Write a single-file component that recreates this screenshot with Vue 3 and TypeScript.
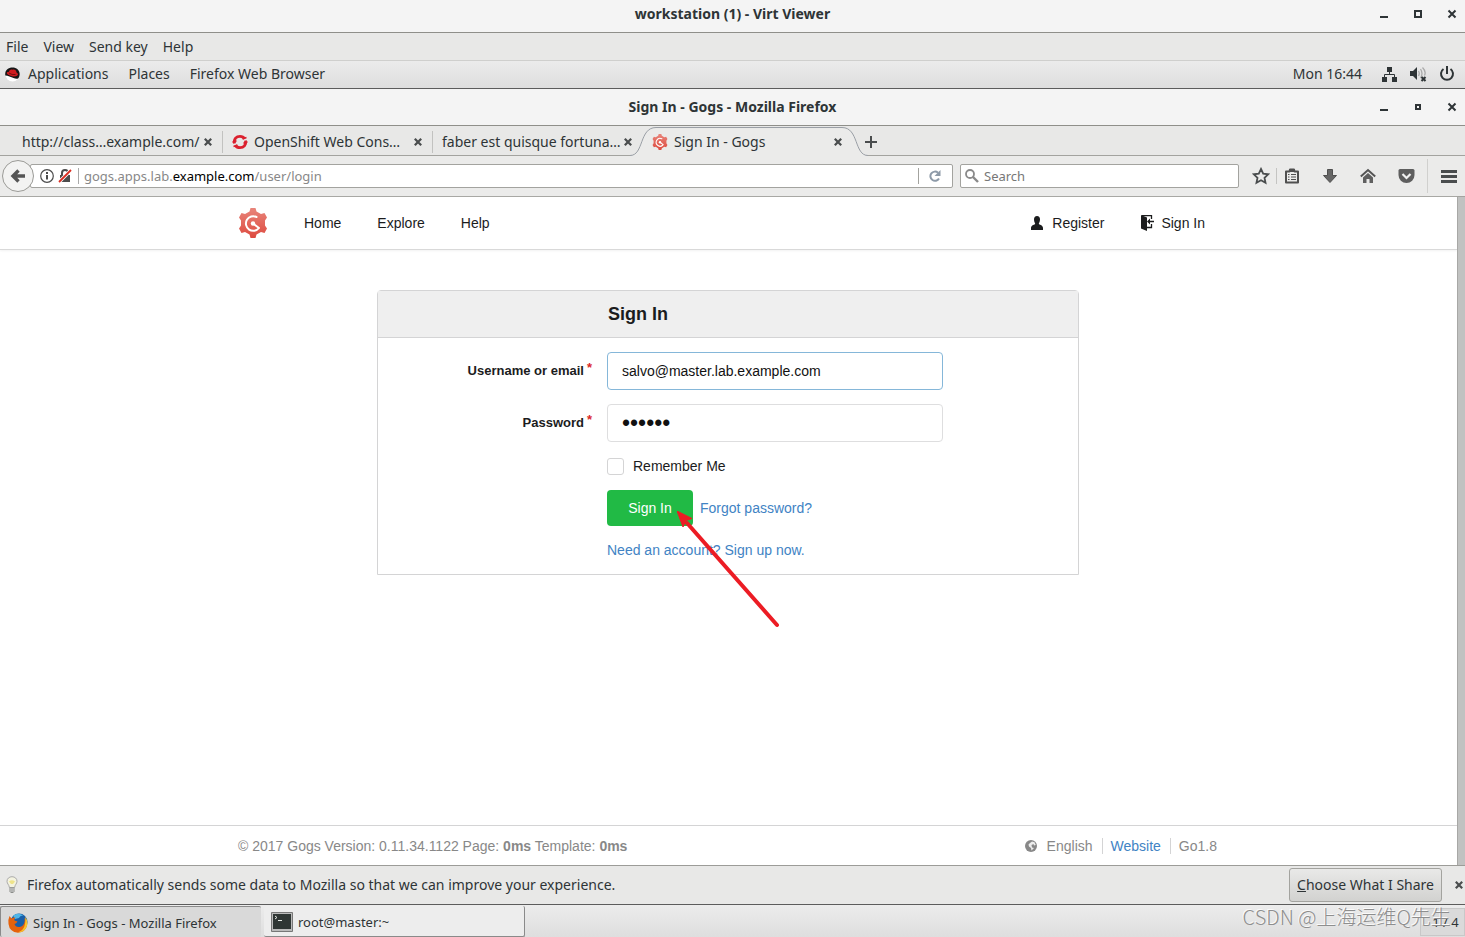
<script setup lang="ts">
import { ref } from 'vue'

interface Tab {
  title: string
  icon: 'none' | 'openshift' | 'gogs'
  active: boolean
}

const viewerMenu: string[] = ['File', 'View', 'Send key', 'Help']
const desktopMenu: string[] = ['Places', 'Firefox Web Browser']
const windows: { title: string; inner: boolean }[] = [
  { title: 'workstation (1) - Virt Viewer', inner: false },
  { title: 'Sign In - Gogs - Mozilla Firefox', inner: true },
]
const tabs: Tab[] = [
  { title: 'http://class…example.com/', icon: 'none', active: false },
  { title: 'OpenShift Web Cons…', icon: 'openshift', active: false },
  { title: 'faber est quisque fortuna…', icon: 'none', active: false },
  { title: 'Sign In - Gogs', icon: 'gogs', active: true },
]
const siteLinks: string[] = ['Home', 'Explore', 'Help']

const username = ref('salvo@master.lab.example.com')
const password = ref('redhat')
const remember = ref(false)
const search = ref('')
</script>

<template>
  <div class="screen">
    <svg class="defs" aria-hidden="true">
      <defs>
        <linearGradient id="gogsFill" gradientUnits="userSpaceOnUse" x1="0" y1="0" x2="0" y2="30">
          <stop offset="0" stop-color="#e8857b" />
          <stop offset="1" stop-color="#de4a3f" />
        </linearGradient>
        <symbol id="gogs" viewBox="0 0 30 30">
          <path
            fill="url(#gogsFill)"
            d="M12.500 0h5l1 3.500 4.500 2.500 3.500-1 2.500 4.500-2 3v5l2 3-2.500 4.500-3.500-1-4.500 2.500-1 3.500h-5l-1-3.500L7 24l-3.500 1L1 20.500l2-3v-5l-2-3L3.500 5 7 6l4.500-2.500z"
          />
          <path fill="none" stroke="#fff" stroke-width="2" stroke-linecap="round" stroke-linejoin="round" d="M18.500 9A7.300 7.300 0 1 0 21 20L15 15.500" />
          <circle cx="15" cy="15.500" r="2.200" fill="#fff" />
        </symbol>
        <symbol id="cross" viewBox="0 0 10 10">
          <path fill="none" stroke="currentColor" stroke-width="2.800" d="M1 1l8 8M9 1L1 9" />
        </symbol>
      </defs>
    </svg>

    <header class="titlebar">
      <h1 class="title">{{ windows[0].title }}</h1>
      <div class="controls">
        <button type="button" aria-label="Minimize"><svg width="10" height="10"><path d="M1 7h8v2H1z" fill="#2e3436" /></svg></button>
        <button type="button" aria-label="Maximize"><svg width="10" height="10"><path d="M2 2h6v6H2z" fill="none" stroke="#2e3436" stroke-width="2" /></svg></button>
        <button type="button" aria-label="Close"><svg width="10" height="10"><path d="M1.500 1.500l7 7M8.500 1.500l-7 7" stroke="#2e3436" stroke-width="2" /></svg></button>
      </div>
    </header>

    <nav class="menubar">
      <button v-for="item in viewerMenu" :key="item" type="button">{{ item }}</button>
    </nav>

    <div class="panel">
      <button type="button" class="apps">
        <svg width="15" height="15" viewBox="0 0 15 15">
          <circle cx="7.500" cy="7.500" r="7" fill="#fff" />
          <path d="M.3 8.500C-.5 3.500 3 .5 7.500.5s8 3.500 7 8c-.3 1.500-1 2.500-1.500 3-1.500.5-3 0-4.500-.5C6 10 3 8.500.3 8.500z" fill="#161616" />
          <path d="M1.800 6.500c0-1.500 1-1.500 1.800-1.300C4.500 2.500 6 2 7.300 2.800c2-1 4 .2 4.200 2.700 1.800 1 2 2.500.5 3.200C9 10.500 4 8.800 1.800 6.500z" fill="#d01c1f" />
          <path d="M4 6q3 2.200 6.500 1.500" fill="none" stroke="#5a0c0c" stroke-width=".8" />
        </svg>
        Applications
      </button>
      <button v-for="item in desktopMenu" :key="item" type="button">{{ item }}</button>
      <div class="status">
        <time>Mon 16:44</time>
        <svg width="16" height="16" viewBox="0 0 16 16" fill="#2e3436">
          <path d="M5 1h5v5H5zM0 11h5v5H0zM10 11h5v5h-5z" />
          <path d="M7.500 6v2.500M2.500 11V8.500h10V11" fill="none" stroke="#2e3436" />
        </svg>
        <svg width="17" height="16" viewBox="0 0 17 16">
          <path d="M0 5h3l4-4v13l-4-4H0z" fill="#2e3436" />
          <path d="M8.500 5q1.500 2.500 0 5M10.500 3q3 4.500 0 9M12.500 1.500q4 4 2 8" fill="none" stroke="#aaa" stroke-width="1.300" />
          <path d="M11.500 11l4 4M15.500 11l-4 4" stroke="#2e3436" stroke-width="2" />
        </svg>
        <svg width="16" height="16" viewBox="0 0 16 16" fill="none" stroke="#2e3436" stroke-width="2">
          <path d="M8 0v8M4.500 3a6 6 0 1 0 7 0" />
        </svg>
      </div>
    </div>

    <div class="titlebar inner">
      <h2 class="title">{{ windows[1].title }}</h2>
      <div class="controls">
        <button type="button" aria-label="Minimize"><svg width="10" height="10"><path d="M1 7h8v2H1z" fill="#2e3436" /></svg></button>
        <button type="button" aria-label="Restore"><svg width="10" height="10"><path d="M3 3h4v4H3z" fill="none" stroke="#2e3436" stroke-width="2" /></svg></button>
        <button type="button" aria-label="Close"><svg width="10" height="10"><path d="M1.500 1.500l7 7M8.500 1.500l-7 7" stroke="#2e3436" stroke-width="2" /></svg></button>
      </div>
    </div>

    <div class="tabs">
      <div v-for="tab in tabs" :key="tab.title" class="tab" :class="{ active: tab.active }">
        <svg v-if="tab.active" class="shape" width="238" height="30" viewBox="0 0 238 30">
          <path d="M0 29.500C14 29.500 9 2.500 26 2.500H212C229 2.500 224 29.500 238 29.500V30H0z" fill="#ebebea" />
          <path d="M0 29.500C14 29.500 9 1.500 26 1.500H212C229 1.500 224 29.500 238 29.500" fill="none" stroke="#9a9fa6" />
        </svg>
        <svg v-if="tab.icon === 'openshift'" class="favicon" viewBox="0 0 16 16" fill="none" stroke="#db212f">
          <path d="M2.500 9.500C1.500 5 4.500 2.300 8 2.300c2.200 0 3.800 1 4.700 2.500M13.500 6.500C14.500 11 11.500 13.700 8 13.700c-2.200 0-3.800-1-4.700-2.500" stroke-width="2.800" />
          <path d="M.5 8.300l4-1.500M1.500 12.500l4-1.500M10.500 5l4-1.500M11.500 9.200l4-1.500" stroke-width="1.600" />
        </svg>
        <svg v-if="tab.icon === 'gogs'" class="favicon"><use href="#gogs" /></svg>
        <span class="tab-title">{{ tab.title }}</span>
        <button type="button" class="tab-close" aria-label="Close tab"><svg width="8" height="8"><use href="#cross" /></svg></button>
      </div>
      <button type="button" class="new-tab" aria-label="New tab">
        <svg width="12" height="12"><path d="M6 0v12M0 6h12" stroke="#4a4d4e" stroke-width="2" /></svg>
      </button>
    </div>

    <div class="toolbar">
      <button type="button" class="back" aria-label="Back">
        <svg width="16" height="16" viewBox="0 0 16 16"><path d="M8.500 2.500L3 8l5.500 5.500M3.500 8H15" fill="none" stroke="#555" stroke-width="3.400" /></svg>
      </button>
      <div class="address">
        <svg width="14" height="14" viewBox="0 0 14 14" fill="none" stroke="#4c4c4c">
          <circle cx="7" cy="7" r="6.300" stroke-width="1.200" /><path d="M7 6v4.500M7 3v2" stroke-width="2" />
        </svg>
        <svg class="lock" width="14" height="14" viewBox="0 0 14 14">
          <path d="M4 7V4a3 3 0 0 1 6 0v3" fill="none" stroke="#4c4c4c" stroke-width="2" /><path d="M2 6h10v7H2z" fill="#4c4c4c" />
          <path d="M1 13L13 1" stroke="#fff" stroke-width="3.500" /><path d="M1 13L13 1" stroke="#d92d21" stroke-width="1.800" />
        </svg>
        <p class="url">gogs.apps.lab.<b>example.com</b>/user/login</p>
        <button type="button" class="reload" aria-label="Reload">
          <svg width="12" height="12" viewBox="0 0 12 12"><path d="M10 8.500A4.600 4.600 0 1 1 9 2.700" fill="none" stroke="#8d9aa8" stroke-width="2" /><path d="M11.500 0v6h-6z" fill="#8d9aa8" /></svg>
        </button>
      </div>
      <label class="search">
        <svg width="14" height="14" viewBox="0 0 14 14" fill="none" stroke="#8a8a8a"><circle cx="5" cy="5" r="4" stroke-width="1.800" /><path d="M8 8l5 5" stroke-width="2.400" /></svg>
        <input v-model="search" type="text" placeholder="Search" aria-label="Search" />
      </label>
      <div class="tools">
        <button type="button" aria-label="Bookmark"><svg width="18" height="18" viewBox="0 0 18 18"><path d="M9 2l2.200 4.700 5 .6-3.700 3.500 1 5L9 13.300l-4.500 2.500 1-5L1.800 7.300l5-.6z" fill="none" stroke="#4a4d4e" stroke-width="1.800" /></svg></button>
        <button type="button" class="list" aria-label="Bookmarks list"><svg width="16" height="16" viewBox="0 0 16 16"><path d="M2 3.500h3.500L6 1.500h4l.5 2H14v11H2z" fill="#ececeb" stroke="#505050" stroke-width="2" stroke-linejoin="round" /><path d="M5.500 1.500h5V4h-5z" fill="#505050" /><path d="M4 6.500h1.500M7 6.500h5M4 9h1.500M7 9h5M4 11.500h1.500M7 11.500h5" stroke="#505050" /></svg></button>
        <button type="button" aria-label="Downloads"><svg width="16" height="16" viewBox="0 0 16 16"><path d="M5.500 1.500h5v6h4L8 14.500 1.500 7.500h4z" fill="#666" stroke="#4f4f4f" /></svg></button>
        <button type="button" aria-label="Home"><svg width="16" height="16" viewBox="0 0 16 16"><path d="M.8 8.500L8 2l7.200 6.500" fill="none" stroke="#555" stroke-width="2" /><path d="M3 9.500L8 5l5 4.500V15H9.500v-4h-3v4H3z" fill="#606060" /></svg></button>
        <button type="button" aria-label="Pocket"><svg width="17" height="16" viewBox="0 0 17 16"><path d="M2 1h13q1.500 0 1.500 1.500V7a8 8 0 0 1-16 0V2.500Q.5 1 2 1z" fill="#5e5e5e" /><path d="M4.500 6l4 4 4-4" fill="none" stroke="#f2f2f2" stroke-width="2.200" /></svg></button>
        <button type="button" class="menu" aria-label="Open menu"><svg width="16" height="13"><path d="M0 1.500h16M0 6.500h16M0 11.500h16" stroke="#4a4d4e" stroke-width="3" /></svg></button>
      </div>
    </div>

    <div class="viewport">
      <div class="page">
        <nav class="site-nav">
          <div class="container">
            <a href="#" aria-label="Gogs"><svg width="30" height="30"><use href="#gogs" /></svg></a>
            <a v-for="link in siteLinks" :key="link" href="#">{{ link }}</a>
            <div class="account">
              <a href="#">
                <svg width="12" height="14" viewBox="0 0 12 14" fill="#1b1c1d"><path d="M6 0c2 0 3 1.300 3 3.500S8 7 7.800 7.800c0 1 4.200 1.200 4.200 4.200v2H0v-2c0-3 4.200-3.200 4.200-4.200C4 7 3 5.700 3 3.500S4 0 6 0z" /></svg>
                Register
              </a>
              <a href="#" class="sign-in">
                <svg width="13" height="16" viewBox="0 0 13 16"><path d="M0 0l6 2.500V16l-6-2.500z" fill="#1b1c1d" /><path d="M1 .7h9.500V4M6 12.500h4.500V9" fill="none" stroke="#1b1c1d" stroke-width="1.300" /><path d="M6 6.500l3-3v2.200h4v1.600H9v2.200z" fill="#1b1c1d" /></svg>
                Sign In
              </a>
            </div>
          </div>
        </nav>

        <main>
          <form class="login" @submit.prevent>
            <h3>Sign In</h3>
            <div class="fields">
              <label class="name" for="user">Username or email<sup>*</sup></label>
              <input id="user" v-model="username" class="box focused" type="text" />
              <label class="name" for="pass">Password<sup>*</sup></label>
              <input id="pass" v-model="password" class="box secret" type="password" />
              <label class="remember"><input v-model="remember" type="checkbox" />Remember Me</label>
              <div class="actions">
                <button type="submit" class="submit">Sign In</button>
                <a href="#">Forgot password?</a>
                <svg class="arrow" width="104" height="120" viewBox="0 0 104 120">
                  <path d="M10 12L100 114" stroke="#ec1c24" stroke-width="4" stroke-linecap="round" />
                  <path d="M0 0L15 7.500 9 9.500 6 16z" fill="#ec1c24" stroke="#ec1c24" />
                </svg>
              </div>
              <a class="register" href="#">Need an account? Sign up now.</a>
            </div>
          </form>
        </main>

        <footer class="site-footer">
          <div class="container">
            <p>© 2017 Gogs Version: 0.11.34.1122 Page: <strong>0ms</strong> Template: <strong>0ms</strong></p>
            <div class="meta">
              <span class="language">
                <svg width="12" height="12" viewBox="0 0 12 12"><circle cx="6" cy="6" r="6" fill="#888" /><path d="M7 1.500l2.500.8L10.800 5 9 5.500 8.500 4 6.500 5 7 7.500 9 8 6.500 10.500 6 8 4 6.500 3.500 4.500 5 3z" fill="#fff" opacity=".85" /></svg>
                English
              </span>
              <a href="#">Website</a>
              <span>Go1.8</span>
            </div>
          </div>
        </footer>
      </div>
      <div class="scrollbar"></div>
    </div>

    <div class="notice">
      <svg width="12" height="18" viewBox="0 0 12 18">
        <path d="M6 .7c3 0 5 2 5 4.600 0 2.500-2 3.200-2.400 6.200H3.400C3 8.500 1 7.800 1 5.300 1 2.700 3 .7 6 .7z" fill="#f4f3df" stroke="#aaa" />
        <path d="M3 5.500q3-2.500 6 0L7 8H5z" fill="#efe48a" /><path d="M3.500 11.500h5v4L7 17H5l-1.500-1.500z" fill="#8b8d8a" /><path d="M4 13h4M4 15h4" stroke="#ddd" />
      </svg>
      <p>Firefox automatically sends some data to Mozilla so that we can improve your experience.</p>
      <button type="button" class="choose"><u>C</u>hoose What I Share</button>
      <button type="button" class="dismiss" aria-label="Dismiss"><svg width="8" height="8"><use href="#cross" /></svg></button>
    </div>

    <div class="taskbar">
      <button type="button" class="task current">
        <svg width="20" height="20" viewBox="0 0 20 20">
          <circle cx="11" cy="9" r="8.500" fill="#1a5fa8" /><path d="M5 2.500Q10-1 15.500 2.500 12 2 11 5L7 6z" fill="#4fb6e8" />
          <path d="M1.500 3l2 2.500q2-1.500 4-1-2 2-1 3l3 1q-1 2-3 2.500 1 3.500 5 3 4-.5 5-5 .5-2 0-4Q19.800 8 19 12.500 17.500 19 10 19.800 1.500 19 .5 11 0 6 1.500 3z" fill="#e5620c" />
          <path d="M17 3.500Q20.500 8 19 13q-2 6-9 6.500 5-2 6.500-6.500 1.500-5 .5-9.500z" fill="#f9c22b" />
        </svg>
        Sign In - Gogs - Mozilla Firefox
      </button>
      <button type="button" class="task">
        <svg width="22" height="20" viewBox="0 0 22 20"><path d="M.5.5h21v19H.5z" fill="#bbb" stroke="#777" /><path d="M2 2h18v15H2z" fill="#2f3634" /><path d="M4 4l2 1.500L4 7M7 8.500h4" fill="none" stroke="#e4e8e4" /></svg>
        root@master:~
      </button>
      <span class="watermark">CSDN @上海运维Q先生</span>
      <button type="button" class="pager">1 / 4</button>
    </div>
  </div>
</template>

<style>
body {
  margin: 0;
}
</style>

<style scoped>
* {
  box-sizing: border-box;
}
.screen {
  display: flex;
  flex-direction: column;
  min-height: 100vh;
  background: #e8e8e7;
  color: #2e3436;
  font: 14px/20px "Noto Sans", "Open Sans", sans-serif;
}
.defs {
  position: absolute;
  width: 0;
  height: 0;
}
svg {
  display: block;
  flex: none;
}
button {
  margin: 0;
  padding: 0;
  border: 0;
  background: none;
  color: inherit;
  font: inherit;
  white-space: nowrap;
}
p, h1, h2, h3 {
  margin: 0;
}
a {
  color: #4183c4;
  text-decoration: none;
}

.titlebar {
  display: grid;
  grid-template-columns: 1fr auto 1fr;
  align-items: center;
  height: 33px;
  padding-bottom: 4px;
  background: #f4f4f4;
  border-bottom: 1px solid #8f8f8a;
}
.titlebar.inner {
  height: 37px;
  padding-bottom: 0;
}
.title {
  grid-column: 2;
  font-size: 14px;
  font-weight: 700;
}
.controls {
  display: flex;
  justify-content: flex-end;
  gap: 24px;
  padding-right: 8px;
}

.menubar {
  display: flex;
  align-items: center;
  gap: 15px;
  height: 28px;
  padding-left: 6px;
  border-bottom: 1px solid #cfcfcd;
}
.panel {
  display: flex;
  align-items: center;
  gap: 20px;
  height: 28px;
  padding: 0 10px 1px 5px;
  background: linear-gradient(#ebebeb, #dedede);
  border-bottom: 1px solid #5c5c5c;
}
.apps {
  display: flex;
  align-items: center;
  gap: 8px;
}
.status {
  display: flex;
  align-items: center;
  gap: 12px;
  margin-left: auto;
}
.status time {
  margin-right: 8px;
}

.tabs {
  display: flex;
  height: 30px;
  padding-left: 12px;
  border-bottom: 1px solid #a3a39f;
}
.tab {
  position: relative;
  display: flex;
  align-items: center;
  gap: 6px;
  width: 210px;
  height: 30px;
  padding: 2px 10px 0;
}
.tab:nth-child(2)::before,
.tab:nth-child(3)::before {
  position: absolute;
  top: 5px;
  left: 0;
  width: 1px;
  height: 22px;
  background: #c2c2c0;
  content: "";
}
.shape {
  position: absolute;
  top: 0;
  left: -12px;
}
.favicon {
  position: relative;
  width: 16px;
  height: 16px;
}
.tab-title {
  position: relative;
  flex: 1;
  min-width: 0;
  white-space: nowrap;
}
.tab-close {
  position: relative;
  color: #4a4d4e;
}
.new-tab {
  padding: 2px 0 0 13px;
}

.toolbar {
  display: flex;
  align-items: center;
  height: 41px;
  padding-left: 2px;
  background: #ebebea;
  border-bottom: 1px solid #a3a39f;
}
.back {
  z-index: 1;
  display: grid;
  place-items: center;
  flex: none;
  width: 32px;
  height: 32px;
  border: 1px solid #9b9b97;
  border-radius: 50%;
  background: #f3f3f2;
}
.address {
  display: flex;
  align-items: center;
  flex: 1;
  height: 24px;
  margin-left: -4px;
  padding-left: 9px;
  border: 1px solid #a3a39f;
  border-radius: 2px;
  background: #fff;
}
.lock {
  margin-left: 4px;
}
.url {
  margin-left: 6px;
  padding-left: 5px;
  border-left: 1px solid #aaa;
  color: #888;
  font-size: 13px;
  line-height: 16px;
}
.url b {
  color: #000;
  font-weight: 400;
}
.reload {
  margin-left: auto;
  padding: 2px 11px 2px 10px;
  border-left: 1px solid #a3a39f;
}
.search {
  display: flex;
  align-items: center;
  gap: 5px;
  width: 279px;
  height: 24px;
  margin-left: 7px;
  padding-left: 4px;
  border: 1px solid #a3a39f;
  border-radius: 2px;
  background: #fff;
}
.search input {
  width: 100%;
  min-width: 0;
  padding: 0;
  border: 0;
  outline: 0;
  background: none;
  font: inherit;
  font-size: 13px;
}
.search input::placeholder {
  color: #777;
}
.tools {
  display: flex;
  align-items: center;
  gap: 22px;
  padding: 0 8px 0 13px;
}
.list {
  margin-left: -16px;
  padding-left: 7px;
  border-left: 1px solid #c4c4c2;
}
.menu {
  height: 34px;
  margin-left: -10px;
  padding-left: 13px;
  border-left: 1px solid #d0d0ce;
}

.viewport {
  display: flex;
  flex: 1;
}
.page {
  display: flex;
  flex: 1;
  flex-direction: column;
  background: #fff;
  color: #1b1c1d;
  font: 14px/20px "Liberation Sans", Arial, sans-serif;
}
.scrollbar {
  width: 8px;
  border-left: 1px solid #a8a8a6;
  background: #c1c2c1;
}
.container {
  display: flex;
  align-items: center;
  width: 100%;
  max-width: 981px;
  margin: 0 auto;
}
.site-nav {
  display: flex;
  height: 53px;
  border-bottom: 1px solid #d9d9d9;
  box-shadow: 0 1px 2px #f2f2f2;
}
.site-nav .container {
  gap: 36px;
}
.site-nav a {
  color: #1b1c1d;
}
.account {
  display: flex;
  gap: 37px;
  margin-left: auto;
  padding-right: 14px;
}
.account a {
  display: flex;
  align-items: center;
  gap: 9px;
}
.account .sign-in {
  gap: 7px;
}

main {
  flex: 1;
  padding: 40px 1px 40px 0;
}
.login {
  max-width: 702px;
  margin: 0 auto;
  border: 1px solid #d4d4d5;
  border-radius: 4px 4px 0 0;
}
.login h3 {
  padding: 13px 0 13px 230px;
  background: #efefef;
  border-bottom: 1px solid #d4d4d5;
  font-size: 18px;
  line-height: 20px;
}
.fields {
  display: grid;
  grid-template-columns: 214px minmax(0, 336px);
  gap: 14px 15px;
  padding: 14px 0;
}
.name {
  justify-self: end;
  font-size: 13px;
  font-weight: 700;
  line-height: 38px;
}
.name sup {
  margin-left: 3px;
  color: #db2828;
  font-size: 13px;
  line-height: 0;
  vertical-align: 3px;
}
.box {
  width: 100%;
  height: 38px;
  padding: 0 14px;
  border: 1px solid #dededf;
  border-radius: 4px;
  outline: 0;
  background: #fff;
  color: #111;
  font: inherit;
}
.focused {
  border-color: #85b7d9;
}
.secret {
  font-size: 23px;
}
.remember,
.actions,
.register {
  grid-column: 2;
  justify-self: start;
}
.remember {
  display: flex;
  align-items: center;
  gap: 9px;
}
.remember input {
  width: 17px;
  height: 17px;
  margin: 0;
  border: 1px solid #d4d4d5;
  border-radius: 3px;
  appearance: none;
}
.remember input:checked {
  background: #4183c4;
}
.actions {
  position: relative;
  display: flex;
  align-items: center;
  gap: 7px;
}
.submit {
  width: 86px;
  height: 36px;
  border-radius: 4px;
  background: #21ba45;
  color: #fff;
}
.arrow {
  position: absolute;
  top: 21px;
  left: 70px;
  z-index: 1;
  pointer-events: none;
}

.site-footer {
  display: flex;
  height: 40px;
  border-top: 1px solid #d4d4d5;
  color: #888;
}
.meta {
  display: flex;
  align-items: center;
  margin-left: auto;
  padding-right: 2px;
}
.meta > * + * {
  margin-left: 9px;
  padding-left: 8px;
  border-left: 1px solid #d4d4d5;
  line-height: 16px;
}
.language {
  display: flex;
  align-items: center;
  gap: 10px;
}

.notice {
  display: flex;
  align-items: center;
  height: 40px;
  padding: 0 2px 0 6px;
  background: #e8e8e7;
  border-top: 1px solid #9c9c98;
  border-bottom: 1px solid #5c5c5c;
}
.notice p {
  margin-left: 9px;
}
.choose {
  height: 34px;
  margin-left: auto;
  padding: 0 7px;
  border: 1px solid #a3a39f;
  border-radius: 3px;
  background: linear-gradient(#e9e9e8, #d2d2d0);
}
.dismiss {
  margin-left: 13px;
  color: #4a4d4e;
}

.taskbar {
  position: relative;
  display: flex;
  gap: 3px;
  height: 32px;
  padding-top: 1px;
  background: linear-gradient(#ececec, #dedede);
}
.task {
  display: flex;
  align-items: center;
  gap: 5px;
  width: 261px;
  padding: 1px 0 0 7px;
  border: 1px solid #8a8a8a;
  border-width: 0 1px 1px 0;
  border-radius: 2px;
  background: #ededed;
  font-size: 13px;
}
.task.current {
  border-width: 1px 0 0 1px;
  background: #d9d9d9;
}
.pager {
  width: 45px;
  height: 28px;
  margin: 2px 0 0 auto;
  padding-left: 6px;
  border: 1px solid #c8c8c8;
  background: #dadada;
  font-size: 13px;
}
.watermark {
  position: absolute;
  right: 14px;
  top: 0;
  z-index: 1;
  color: #8e8e8e;
  font: 300 20px/24px "Noto Sans CJK SC", sans-serif;
  text-shadow: -1px -1px 0 #fafafa;
  white-space: nowrap;
}
</style>
